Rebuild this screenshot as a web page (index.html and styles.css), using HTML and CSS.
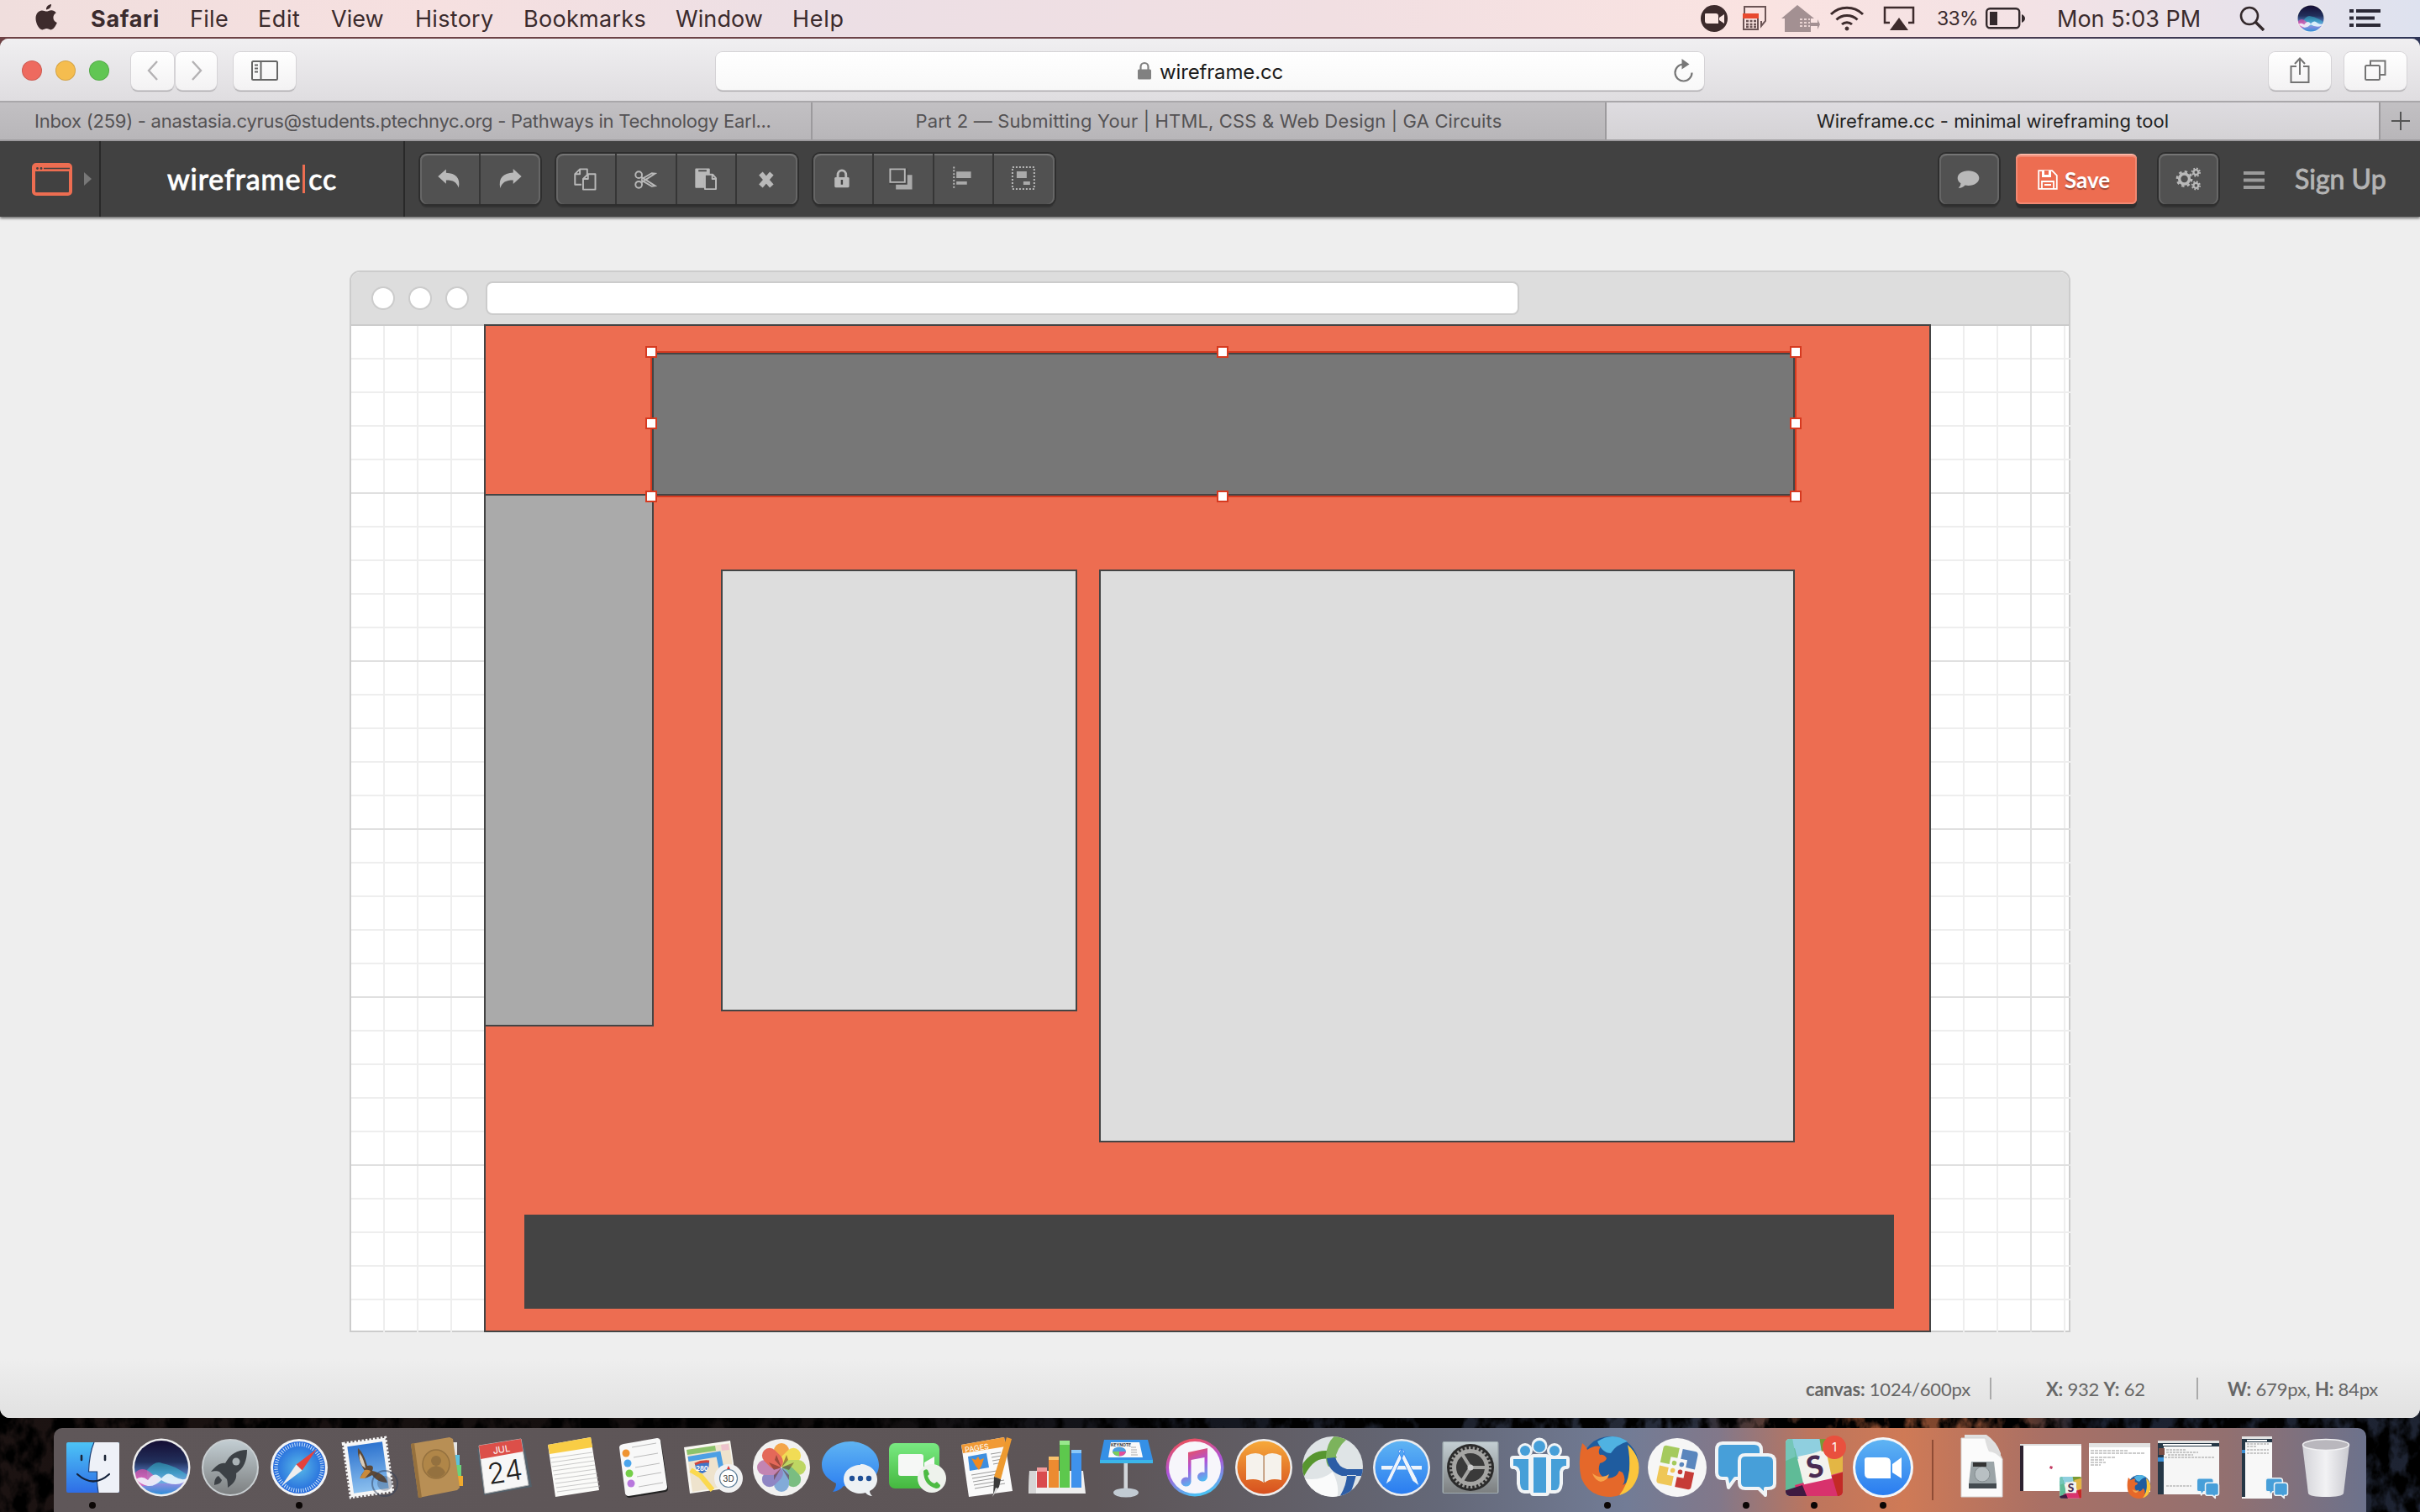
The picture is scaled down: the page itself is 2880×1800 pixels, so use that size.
FILE: index.html
```html
<!DOCTYPE html>
<html lang="en">
<head>
<meta charset="utf-8">
<title>Wireframe.cc - minimal wireframing tool</title>
<link rel="stylesheet" href="styles.css">
</head>
<body>
<div class="desktop">
<svg class="wallpaper" viewBox="0 0 2880 112" preserveAspectRatio="none">
  <defs>
    <linearGradient id="rock"><stop offset="0" stop-color="#1c1312"/><stop offset=".35" stop-color="#120e0e"/><stop offset=".5" stop-color="#141720"/><stop offset=".7" stop-color="#272d3c"/><stop offset=".76" stop-color="#8a4a2c"/><stop offset=".83" stop-color="#7a452f"/><stop offset=".86" stop-color="#1b2130"/><stop offset="1" stop-color="#1e2433"/></linearGradient>
    <filter id="grain" x="0" y="0" width="100%" height="100%"><feTurbulence type="fractalNoise" baseFrequency=".045 .035" numOctaves="4" seed="4"/><feColorMatrix values="0 0 0 0 0  0 0 0 0 0  0 0 0 0 0  4 0 0 0 -1.4"/></filter>
  </defs>
  <rect width="2880" height="112" fill="url(#rock)"/>
  <rect width="2880" height="112" filter="url(#grain)"/>
</svg>

<header class="menubar">
  <svg class="apple" width="28" height="34" viewBox="0 0 28 34"><path d="M20 1c.3 3.200-2.600 6.500-6 6.400C13.700 4.200 16.700 1.200 20 1zM14.300 9.600c1.500 0 3.200-1.400 5.800-1.400 2.200 0 4.400 1.200 5.700 3.100-5 3-4.200 9.800 1 11.800-1.300 3.700-4.300 8.300-7.200 8.300-2 0-2.700-1.300-5.100-1.300s-3.200 1.300-5.100 1.300C5.700 31.400 1.500 24 1.500 18c0-6 3.700-9.500 7.400-9.500 2.300 0 4 1.100 5.400 1.100z" fill="#3d2b2c"/></svg>
  <nav class="menus">
    <span class="m-app">Safari</span><span class="m-file">File</span><span class="m-edit">Edit</span><span class="m-view">View</span><span class="m-history">History</span><span class="m-bookmarks">Bookmarks</span><span class="m-window">Window</span><span class="m-help">Help</span>
  </nav>
  <div class="tray">
    <svg width="32" height="34" viewBox="0 0 32 34"><circle cx="16" cy="17" r="16" fill="#3d2b2c"/><path d="M5 12q0-1 1-1h12q3 0 3 3v9H8q-3 0-3-3zM22 16l6-4v11l-6-4z" fill="#fbe6e3"/></svg>
    <svg class="t-cal" width="28" height="30" viewBox="0 0 28 30" fill="none"><path d="M2 9V1h25v17l-5 6V18" stroke="#6b5455" stroke-width="2"/><path d="M1 10h17v18H1z" stroke="#6b5455" stroke-width="2"/><path d="M0 9h19v6H0z" fill="#e8492f"/><path d="M4 18h12M4 22h12M4 25h12" stroke="#6b5455" stroke-width="2.500" stroke-dasharray="3 1.500"/></svg>
    <svg class="t-house" width="46" height="34" viewBox="0 0 46 34"><path d="M19 1 0 17h4v16h31v-7h8v4l3-6-3-6v4h-8v-5h4L24 5z" fill="#a39092"/><path d="M22 18h12M22 22h12M22 26h12" stroke="#e8d3d2" stroke-width="2" stroke-dasharray="3 2"/></svg>
    <svg class="t-wifi" width="42" height="30" viewBox="0 0 42 30" fill="none" stroke="#3d2b2c" stroke-width="3"><path d="M2 10a27 27 0 0 1 38 0M8.500 16.500a18 18 0 0 1 25 0M15 22a9 9 0 0 1 12 0"/><circle cx="21" cy="27" r="2" fill="#3d2b2c" stroke-width="1"/></svg>
    <svg class="t-air" width="38" height="30" viewBox="0 0 38 30"><path d="M8 20H2V2h34v18h-6" fill="none" stroke="#3d2b2c" stroke-width="2.500"/><path d="M19 14 30 29H8z" fill="#3d2b2c"/></svg>
    <span class="t-pct">33%</span>
    <svg class="t-bat" width="48" height="26" viewBox="0 0 48 26"><rect x="1.200" y="1.200" width="39" height="23" rx="4" fill="none" stroke="#33292c" stroke-width="2.400"/><path d="M5 5h9v16H5z" fill="#33292c"/><path d="M43 8q4 2 4 5t-4 5z" fill="#33292c"/></svg>
    <span class="t-clock">Mon 5:03 PM</span>
    <svg class="t-find" width="30" height="30" viewBox="0 0 30 30" fill="none" stroke="#33292c" stroke-width="2.600"><circle cx="12" cy="12" r="10"/><path d="m19 19 10 10" stroke-width="3.400"/></svg>
    <svg class="t-siri" width="32" height="32" viewBox="8 14 66 66"><use href="#siriball"/></svg>
    <svg class="t-list" width="38" height="22" viewBox="0 0 38 22" stroke="#2b2936" stroke-width="4"><path d="M0 2h5M8 2h29M0 10.500h5M8 10.500h22M0 19h5M8 19h29"/></svg>
  </div>
</header>

<main class="window">
  <div class="safari-bar">
    <div class="lights"><i class="red"></i><i class="yellow"></i><i class="green"></i></div>
    <div class="btn back"><svg width="14" height="24" viewBox="0 0 14 24"><path d="M12 1 2 12l10 11" fill="none" stroke="#b4b2b4" stroke-width="2.400"/></svg></div>
    <div class="btn fwd"><svg width="14" height="24" viewBox="0 0 14 24"><path d="m2 1 10 11L2 23" fill="none" stroke="#b4b2b4" stroke-width="2.400"/></svg></div>
    <div class="btn side"><svg width="32" height="24" viewBox="0 0 32 24" fill="none" stroke="#666" stroke-width="2"><rect x="1" y="1" width="30" height="22" rx="1.500"/><path d="M11.500 1v22"/><path d="M4 5.500h4M4 9.500h4M4 13.500h4"/></svg></div>
    <div class="address">
      <svg class="lock" width="16" height="22" viewBox="0 0 16 22"><path d="M3.500 10V6.500a4.500 4.500 0 0 1 9 0V10" fill="none" stroke="#818181" stroke-width="2.200"/><rect y="9.500" width="16" height="12" rx="1.500" fill="#818181"/></svg>
      <span class="url">wireframe.cc</span>
      <svg class="reload" width="26" height="28" viewBox="0 0 26 28"><path d="M12 6.500a10 10 0 1 0 10.500 10" fill="none" stroke="#777" stroke-width="2.200"/><path d="m10.500 0 9 6.500-9 6z" fill="#777"/></svg>
    </div>
    <div class="btn share"><svg width="24" height="32" viewBox="0 0 24 32" fill="none" stroke="#737373" stroke-width="2"><path d="M8 11H1.500v19h21V11H16M12 21V2M6 8l6-6.500L18 8"/></svg></div>
    <div class="btn tabs-btn"><svg width="26" height="26" viewBox="0 0 26 26" fill="none" stroke="#737373" stroke-width="2"><rect x="1" y="7" width="17" height="17" rx="1.500"/><path d="M7 7V1.500h17.500V18H18"/></svg></div>
  </div>
  <div class="tabs">
    <div class="tab t1">Inbox (259) - anastasia.cyrus@students.ptechnyc.org - Pathways in Technology Earl...</div>
    <div class="tab t2">Part 2 — Submitting Your | HTML, CSS &amp; Web Design | GA Circuits</div>
    <div class="tab t3">Wireframe.cc - minimal wireframing tool</div>
    <div class="newtab"><svg width="22" height="22" viewBox="0 0 22 22"><path d="M11 0v22M0 11h22" stroke="#555" stroke-width="2"/></svg></div>
  </div>

  <div class="appbar">
    <div class="device">
      <svg width="48" height="39" viewBox="0 0 48 39"><rect x="2" y="2" width="44" height="35" rx="3" fill="none" stroke="#ed6d51" stroke-width="4"/><path d="M2 3h44v7H2z" fill="#ed6d51"/><path d="M14 6.500h31" stroke="#414141" stroke-width="1.400"/><circle cx="6.500" cy="6.500" r="1.400" fill="#414141"/><circle cx="11" cy="6.500" r="1.400" fill="#414141"/></svg>
      <svg class="caret" width="9" height="16" viewBox="0 0 9 16"><path d="m0 0 9 8-9 8z" fill="#777"/></svg>
    </div>
    <div class="brand"><span>wireframe</span><i></i><span class="cc">cc</span></div>
    <div class="group g1">
      <svg viewBox="0 0 72 60"><path d="M22 27 32 18v4.500C44 23 50 29 47.500 41 45 34 41 31.500 32 31.500V36z" fill="#b9b9b9"/></svg>
      <svg viewBox="0 0 72 60"><path d="M49 27 39 18v4.500C27 23 21 29 23.500 41 26 34 30 31.500 39 31.500V36z" fill="#b9b9b9"/></svg>
    </div>
    <div class="group g2">
      <svg viewBox="0 0 72 60" fill="none" stroke="#b9b9b9" stroke-width="2" stroke-linejoin="round"><path d="M31 37h-8V24l6-6h9v7M29 18v6h-6"/><path d="M33 43h15V24h-9l-6 6zM39 24v6h-6" fill="#515151"/></svg>
      <svg viewBox="0 0 72 60" fill="none" stroke="#b9b9b9" stroke-width="2"><circle cx="27" cy="25" r="4"/><circle cx="27" cy="37" r="4"/><path d="m30 27.500 17 11-4 .500-13-7.500M30 34.500l17-11-4-.500-13 7.500"/></svg>
      <svg viewBox="0 0 72 60"><path d="M22 18q0-1 1-1h16q1 0 1 1v6h-2l-5 5v12H23q-1 0-1-1z" fill="#b9b9b9"/><path d="M26 20h10" stroke="#515151" stroke-width="2"/><path d="M34 42.500h13.500V29l-4-4.500H34zM43 24v6h5" fill="#515151" stroke="#b9b9b9" stroke-width="2" stroke-linejoin="round"/></svg>
      <svg viewBox="0 0 72 60"><path d="m28.500 23.500 13 15m0-15-13 15" stroke="#b9b9b9" stroke-width="6"/></svg>
    </div>
    <div class="group g3">
      <svg viewBox="0 0 72 60"><path d="M30 29v-4a5 5.500 0 0 1 10 0v4" fill="none" stroke="#b9b9b9" stroke-width="3"/><rect x="26" y="28" width="18" height="12.500" rx="1.500" fill="#b9b9b9"/><path d="M35 31v6" stroke="#444" stroke-width="2.500"/></svg>
      <svg viewBox="0 0 72 60"><path d="M27 25h20v18H27z" fill="#aaa"/><path d="M19 17h22v20H19z" fill="#444"/><path d="M20 18h18v16H20z" fill="#515151" stroke="#b9b9b9" stroke-width="2"/></svg>
      <svg viewBox="0 0 72 60"><path d="M24 15v28" stroke="#b9b9b9" stroke-width="2" stroke-dasharray="2 2"/><path d="M27 21h18v8H27zM27 33h13v4H27z" fill="#aaa"/></svg>
      <svg viewBox="0 0 72 60"><rect x="22" y="16" width="26" height="26" fill="none" stroke="#b9b9b9" stroke-width="2" stroke-dasharray="2 2"/><path d="M27 21h12v8H27zM35 33h8v4h-8z" fill="#aaa"/></svg>
    </div>
    <div class="right">
      <div class="group"><svg viewBox="0 0 72 60"><path d="M35 20c7.500 0 13 3.800 13 9s-5.500 9-13 9l-4-.400q-3 3.400-8 3.400 3-2.500 2.800-5.800Q22 33 22 29c0-5.200 5.500-9 13-9z" fill="#b9b9b9"/></svg></div>
      <div class="save"><svg width="24" height="24" viewBox="0 0 24 24"><path d="M1.200 1.200h16l5.600 5.600v16H1.200zM5 22v-8h14v8M8 18h8" fill="none" stroke="#fff" stroke-width="1.800"/><path d="M5 1h11v8H5z" fill="#fff"/><path d="M8 1h5v5H8z" fill="#ed6d51"/></svg><span>Save</span></div>
      <div class="group gears"><svg viewBox="0 0 72 60" fill="none" stroke="#b9b9b9"><circle cx="31" cy="30" r="6" stroke-width="3.500"/><circle cx="31" cy="30" r="8.800" stroke-width="2.500" stroke-dasharray="3.450 3.450"/><circle cx="45" cy="22" r="3" stroke-width="2.400"/><circle cx="45" cy="22" r="4.800" stroke-width="1.800" stroke-dasharray="1.880 1.880"/><circle cx="45" cy="38" r="3" stroke-width="2.400"/><circle cx="45" cy="38" r="4.800" stroke-width="1.800" stroke-dasharray="1.880 1.880"/></svg></div>
      <svg class="burger" width="25" height="21" viewBox="0 0 25 21"><path d="M0 2h25M0 10.500h25M0 19h25" stroke="#9b9b9b" stroke-width="4"/></svg>
      <span class="signup">Sign Up</span>
    </div>
  </div>

  <div class="page">
    <section class="frame">
      <div class="frame-head"><i></i><i></i><i></i><div class="frame-url"></div></div>
      <div class="canvas">
        <div class="shape s-bg"></div>
        <div class="shape s-side"></div>
        <div class="shape s-card1"></div>
        <div class="shape s-card2"></div>
        <div class="shape s-foot"></div>
        <div class="shape s-head"></div>
        <div class="handles"><b></b><b></b><b></b><b></b><b></b><b></b><b></b><b></b></div>
      </div>
    </section>
    <footer class="status">
      <span class="st1"><b>canvas:</b> 1024/600px</span><i></i><span class="st2"><b>X:</b> 932 <b>Y:</b> 62</span><i></i><span class="st3"><b>W:</b> 679px, <b>H:</b> 84px</span>
    </footer>
  </div>
</main>

<div class="dock">
  <svg viewBox="0 0 82 100"><defs><linearGradient id="fb" x2="0" y2="1"><stop stop-color="#4cc4f6"/><stop offset="1" stop-color="#2e6de6"/></linearGradient></defs><rect x="10" y="17" width="63" height="60" rx="2" fill="url(#fb)"/><path d="M43 17h28q2 0 2 2v56q0 2-2 2H48c-1.500-8-2-16-1.500-25H36.500C37 38 39 26 43 17z" fill="#eef1f8"/><path d="M43 17c-4 9-6 21-6.500 35h10c-.5 9 0 17 1.500 25" fill="none" stroke="#1d3f75" stroke-width="1.200"/><path d="M28 33v5M56 33v5" stroke="#1b2536" stroke-width="2.600" stroke-linecap="round"/><path d="M23 55q19 17 38 0" fill="none" stroke="#14223a" stroke-width="2.200" stroke-linecap="round"/><circle cx="41" cy="92" r="4" class="dot"/></svg>
  <svg viewBox="0 0 82 100"><defs><linearGradient id="sb" x2="0" y2="1"><stop stop-color="#150d33"/><stop offset=".4" stop-color="#22305c"/><stop offset=".6" stop-color="#4b6fb0"/><stop offset=".75" stop-color="#a58be0"/><stop offset="1" stop-color="#2f8fd8"/></linearGradient></defs><g id="siriball"><circle cx="41" cy="47" r="34.500" fill="#eee"/><circle cx="41" cy="47" r="32" fill="url(#sb)"/><path d="M24 50q10-12 18-8 14 2 30 14-4 8-10 10H24z" fill="#35d0e0" opacity=".45"/><path d="M10 53q8-8 18 0 6 6 12 8-8 8-22 8-8-6-8-16z" fill="#ff4fa8" opacity=".6"/><path d="M11 61q7-5 14 1 8-12 16-2 8-10 16-2 8 5 15 2-4 7-14 7-10 0-17-5-8 8-16 7-9-2-14-8z" fill="#f2fcff" opacity=".85"/></g></svg>
  <svg viewBox="0 0 82 100"><defs><linearGradient id="gr" x2="0" y2="1"><stop stop-color="#c3ced3"/><stop offset="1" stop-color="#7c7f80"/></linearGradient></defs><circle cx="41" cy="47" r="33" fill="url(#gr)" stroke="#c9cfd2" stroke-width="2"/><path d="M61 26c-12 0-20 5-26 16-6-1-11 3-17 10 4-1 8-1 10 0l9 9c1 3 1 7 1 10 8-5 11-11 10-17 9-6 13-15 13-28z" fill="#3c4146"/><circle cx="48" cy="40" r="4.500" fill="#aab2b6"/><path d="M27 57c-4 2-5 6-5 11 4-1 8-2 9-6z" fill="#3c4146"/></svg>
  <svg viewBox="0 0 82 100"><defs><radialGradient id="sf"><stop stop-color="#58b9e8"/><stop offset="1" stop-color="#2368dc"/></radialGradient></defs><circle cx="41" cy="47" r="34" fill="#f3f4f5"/><circle cx="41" cy="47" r="31" fill="url(#sf)"/><circle cx="41" cy="47" r="27.500" fill="none" stroke="#cfe6fa" stroke-width="4.500" stroke-dasharray="1 1.880"/><path d="M62 25 37.500 43.500l7 7z" fill="#e5413b"/><path d="M20 69l17.500-25.500 7 7z" fill="#eee"/><circle cx="41" cy="92" r="4" class="dot"/></svg>
  <svg viewBox="0 0 82 100"><defs><linearGradient id="ml" x2="0" y2="1"><stop stop-color="#2d73cf"/><stop offset="1" stop-color="#8cc0ee"/></linearGradient></defs><g transform="rotate(-8 41 47)"><rect x="16" y="15" width="50" height="64" fill="#f6f6f6"/><rect x="15.500" y="14.500" width="51" height="65" fill="none" stroke="#f6f6f6" stroke-width="3" stroke-dasharray="2.500 2"/><rect x="20" y="19" width="42" height="56" fill="url(#ml)"/></g><path d="M29 24c5 4 9 13 11 21 7-2 8 2 6 6 9 2 16 6 18 14-8 0-15-4-18-9-6 3-9 5-14 3 1-4 3-6 5-8-5-8-9-18-8-27z" fill="#5d4937"/><path d="M31 30c4 5 6 12 7 18l-4-3c-3-5-4-10-3-15z" fill="#d9cdbb"/><path d="M37 50q6-1 7 2l-7 8h-6z" fill="#c98a3c"/><circle cx="61" cy="66" r="15" fill="none" stroke="#32405a" stroke-width="2" opacity=".5"/><circle cx="61" cy="66" r="9" fill="#32405a" opacity=".3"/></svg>
  <svg viewBox="0 0 82 100"><path d="M60 17h5v15h-5z" fill="#e5e5e5"/><path d="M62 32h6v12h-6z" fill="#5cc0dd"/><path d="M63 44h7v13h-7z" fill="#6bd27b"/><path d="M64 57h8v12h-8z" fill="#efaa2e"/><path d="m10 19 46-8 4 2 8 58-3 3-46 9z" fill="#b88f55"/><path d="m10 19 4-1 9 65h-4z" fill="#96713e"/><ellipse cx="40" cy="43" rx="16" ry="17" fill="#b08648" stroke="#94713f" stroke-width="1.500"/><circle cx="40" cy="39" r="6" fill="#94713f"/><path d="M29 53q2-6 11-8 9 2 11 8-4 6-11 6t-11-6z" fill="#94713f"/></svg>
  <svg viewBox="0 0 82 100"><path d="m7 25 55-10 10 55-57 10z" fill="#53606a"/><path d="m9 21 50-8 9 55-52 10z" fill="#f7f7f7" stroke="#bbb"/><path d="m9 21 50-8 2.500 15L11 37z" fill="#dc4f49"/><g transform="rotate(-9 40 46)" font-family="Inter,sans-serif" text-anchor="middle"><text x="39" y="29" font-size="11" fill="#fff">JUL</text><text x="39" y="64" font-size="34" font-weight="300" fill="#222">24</text></g></svg>
  <svg viewBox="0 0 82 100"><path d="m9 20 51-9 10 63-52 8z" fill="#fbfbf9"/><path d="m9 20 51-9 2 12-51 8z" fill="#f9cd45"/><path d="m12 36 50-7m-49 12 50-7m-49 12 50-7m-49 12 50-7m-49 12 50-7m-49 12 51-7m-50 12 51-7m-50 12 51-7m-50 12 51-7" stroke="#bdbdbd" stroke-width=".8"/></svg>
  <svg viewBox="0 0 82 100"><path d="m17 19 40-7q3 0 4 3l8 55q0 3-3 4l-43 7q-3 0-4-3l-7-55q0-3 5-4z" fill="#222" transform="translate(1 2)"/><path d="m17 19 40-7q3 0 4 3l8 55q0 3-3 4l-43 7q-3 0-4-3l-7-55q0-3 5-4z" fill="#f8f8f8"/><circle cx="20" cy="30" r="4.500" fill="#ef9432"/><circle cx="22" cy="42" r="4.500" fill="#4aa5ec"/><circle cx="24" cy="54" r="4.500" fill="#75cf49"/><circle cx="26" cy="66" r="4.500" fill="#b877dd"/><path d="m27 23 29-5M29 35l29-5M31 47l29-5M33 58l29-5M35 70l29-5" stroke="#bbb"/></svg>
  <svg viewBox="0 0 82 100"><path d="m7 23 55-8 8 55-56 8z" fill="#f8f7f2"/><path d="m10 26 51-8 7 50-51 8z" fill="#eee3cd"/><path d="m10 26 34-5 1 6-34 5z" fill="#8cc36b"/><path d="m12 37 36-6 8 40" fill="none" stroke="#4da0e4" stroke-width="6"/><path d="m15 50 12 7 14 17" fill="none" stroke="#fbd950" stroke-width="6"/><path d="m51 20 9-1 1 7-9 1z" fill="#eec3cd"/><path d="M20 43q8-4 17-2 0 11-8 13-8-2-9-11z" fill="#3f75c8"/><path d="M20 43q8-4 17-3" stroke="#d0453d" stroke-width="3" fill="none"/><text x="28.500" y="51" font-size="7.500" font-family="Inter,sans-serif" font-weight="700" fill="#fff" text-anchor="middle">280</text><circle cx="60" cy="60" r="17" fill="#f1f1f1"/><circle cx="60" cy="60" r="10.500" fill="#fff" stroke="#5d7f9b" stroke-width="1.200"/><text x="60" y="64" font-size="10" font-family="Inter,sans-serif" fill="#333" text-anchor="middle">3D</text><path d="m60 45-2 4h4z" fill="#d33"/></svg>
  <svg viewBox="0 0 82 100"><circle cx="41" cy="47" r="34" fill="#f1f1f0"/><g opacity=".85"><rect x="32" y="18" width="18" height="28" rx="9" fill="#f4982c"/><rect x="32" y="18" width="18" height="28" rx="9" fill="#f2d93a" transform="rotate(45 41 47)"/><rect x="32" y="18" width="18" height="28" rx="9" fill="#b4d24b" transform="rotate(90 41 47)"/><rect x="32" y="18" width="18" height="28" rx="9" fill="#66b56e" transform="rotate(135 41 47)"/><rect x="32" y="18" width="18" height="28" rx="9" fill="#6f9fd4" transform="rotate(180 41 47)"/><rect x="32" y="18" width="18" height="28" rx="9" fill="#7f74bd" transform="rotate(225 41 47)"/><rect x="32" y="18" width="18" height="28" rx="9" fill="#bb72a8" transform="rotate(270 41 47)"/><rect x="32" y="18" width="18" height="28" rx="9" fill="#e2513f" transform="rotate(315 41 47)"/></g><path d="m41 47-8-9 2-6 6 15 6-15 2 6-8 9 15-6-6 9-9-3 9 9v6l-9-15-9 15v-6l9-9-9 3-6-9z" fill="#5a2a20" opacity=".5"/></svg>
  <svg viewBox="0 0 82 100"><defs><linearGradient id="bl" x2="0" y2="1"><stop stop-color="#5fb4f3"/><stop offset="1" stop-color="#2a7cf0"/></linearGradient></defs><path d="M41 16c18 0 34 12 34 28S59 70 41 70q-5 0-8-1-5 6-13 7 4-5 4-10C14 61 7 54 7 44c0-16 16-28 34-28z" fill="url(#bl)"/><path d="M53 43c11 0 20 8 20 18 0 6-3 11-9 14 0 2 1 4 3 6-4 0-6-2-8-4q-3 1-6 1c-11 0-20-7-20-17s9-17 20-17z" fill="#edf1f4"/><g fill="#1f4f96"><circle cx="43" cy="60" r="3.200"/><circle cx="53" cy="60" r="3.200"/><circle cx="63" cy="60" r="3.200"/></g></svg>
  <svg viewBox="0 0 82 100"><defs><linearGradient id="gn" x2="0" y2="1"><stop stop-color="#79ea82"/><stop offset="1" stop-color="#45b83f"/></linearGradient></defs><rect x="5" y="18" width="60" height="54" rx="7" fill="url(#gn)"/><path d="M16 34q0-3 3-3h24q3 0 3 3v20q0 3-3 3H19q-3 0-3-3zM47 41l12-7v20l-12-5z" fill="#f6f8f6"/><circle cx="56" cy="60" r="17" fill="#eef2ec"/><path d="M46 51q3-3 5-1l2 5-2 2q2 7 8 9l3-2 4 4q0 4-5 4-15-4-15-21z" fill="#4dbb43"/></svg>
  <svg viewBox="0 0 82 100"><path d="m9 20 51-9 10 64-52 7z" fill="#fafafa"/><path d="m9 20 51-9 2 11-51 8z" fill="#f19a35"/><text x="28" y="27" transform="rotate(-9 28 27)" font-size="9" font-family="Inter,sans-serif" fill="#fff" text-anchor="middle">PAGES</text><path d="m17 34 22-4 3 17-23 4z" fill="#3e8ede"/><path d="m21 36 5 2 3-4 2 4 5-2-3 9-3 5-4-5z" fill="#f28a1f"/><path d="m44 31 12-2m-11 6 12-2m-11 6 12-2m-11 6 12-2M21 56l36-6m-35 10 36-6m-35 10 30-5m-29 9 36-6m-35 10 36-6" stroke="#999"/><path d="m63 11 6 2-13 48-8-3z" fill="#ee9a2f"/><path d="m48 58 8 3-2 9-7 10z" fill="#3b3b3b"/><path d="m50 71 3 1-7 10z" fill="#ddd"/></svg>
  <svg viewBox="0 0 82 100"><path d="M8 51h64l3 27H7z" fill="#efefef"/><path d="M8 51h8v27H7z" fill="#d6d6d6"/><path d="M17 48h12v23H17z" fill="#d94b4e"/><path d="M31 34h12v37H31z" fill="#ec8b31"/><path d="M44 16h12v55H44z" fill="#5dc84d"/><path d="M58 26h12v45H58z" fill="#3f92ec"/><path d="M17 47h12v5H17z" fill="#f19a9b"/><path d="M31 34h12v4H31z" fill="#f8c16d"/><path d="M44 15h12v5H44z" fill="#98e98c"/><path d="M58 26h12v4H58z" fill="#8bc8f8"/></svg>
  <svg viewBox="0 0 82 100"><path d="M38.500 40h4.500v38h-4.500z" fill="#d2d6da"/><ellipse cx="41" cy="77" rx="15" ry="5.500" fill="#c2cbd3"/><path d="M15 14h52l6 24H10z" fill="#3590e6"/><path d="M10 38h63v4H10z" fill="#3bb6ea"/><path d="m23 17 34 0 4 18H20z" fill="#fafafa"/><text x="35" y="21.500" font-size="5" font-weight="700" font-family="Inter,sans-serif" fill="#333" text-anchor="middle">KEYNOTE</text><ellipse cx="33" cy="28" rx="8" ry="5.500" fill="#4d9fe0"/><path d="M33 28h8q-1 5-8 5.500z" fill="#e24f9a"/><path d="M33 28v5.500q-7-1-8-5.500z" fill="#7ccc5b"/><path d="M47 23h6m-6 3h7m-7 3h7m-7 3h8" stroke="#aaa"/></svg>
  <svg viewBox="0 0 82 100"><defs><linearGradient id="it" x1=".2" x2=".5" y2="1"><stop stop-color="#f2504f"/><stop offset=".5" stop-color="#b052d8"/><stop offset="1" stop-color="#49c2f4"/></linearGradient></defs><circle cx="41" cy="47" r="34.500" fill="url(#it)"/><circle cx="41" cy="47" r="31" fill="#f7f6fb"/><path d="M33 29l23-5v34a6 5.500 0 1 1-3.500-5V35L36.500 38v26a6 5.500 0 1 1-3.500-5z" fill="url(#it)"/></svg>
  <svg viewBox="0 0 82 100"><defs><linearGradient id="or" x2="0" y2="1"><stop stop-color="#f6a93a"/><stop offset="1" stop-color="#d7501f"/></linearGradient></defs><circle cx="41" cy="47" r="34" fill="#eee"/><circle cx="41" cy="47" r="31.500" fill="url(#or)"/><path d="M20 33q12-6 20.500 0 .5.500.500 1v31q-8-6-21-3zM62 33q-12-6-20 0v32q7-6 20-3z" fill="#f5f2ec"/><path d="M41 33v31" stroke="#ba9d83" stroke-width="1.500"/></svg>
  <svg viewBox="0 0 82 100"><defs><clipPath id="cb"><circle cx="41" cy="46" r="36"/></clipPath></defs><g clip-path="url(#cb)"><path d="M0 0h82v90H0z" fill="#dfe4e6"/><path d="M5 60q22 4 36-8 10 20 4 34H10z" fill="#fafbfb"/><path d="M2 48Q14 26 34 27q8 1 12 8l-6 3q-22-8-36 26z" fill="#57962f"/><path d="M48 6Q34 14 33 34q0 8 3 12l9-2q-4-16 14-32z" fill="#7cb35c"/><path d="M34 36q2 16 18 21h26V49H58q-10-2-14-14zM58 56h11q-4 16-9 26H49q8-12 9-26z" fill="#2c5da6"/></g></svg>
  <svg viewBox="0 0 82 100"><circle cx="41" cy="47" r="34" fill="#ececee"/><circle cx="41" cy="47" r="31.500" fill="url(#bl)"/><path d="M17 45h48v4.500H17z" fill="#eef4fb"/><path d="m41 25-17 36-2 6 6-4 17-35zM37 27l4-2 18 35 3 9-8-6z" fill="#eef4fb" stroke="#3d8ef2"/></svg>
  <svg viewBox="0 0 82 100"><rect x="7.500" y="16" width="67" height="62" rx="2" fill="#a2aeb2"/><rect x="9" y="17" width="64" height="60" fill="url(#gr)"/><circle cx="41" cy="47" r="28" fill="#2b2b2b"/><circle cx="41" cy="47" r="23" fill="none" stroke="#9a9a98" stroke-width="4" stroke-dasharray="2.400 2.400"/><circle cx="41" cy="47" r="19.500" fill="#3a3a3a" stroke="#a5a5a3" stroke-width="5"/><path d="M41 47 31 31M41 47h20M41 47 31 63" stroke="#a5a5a3" stroke-width="4"/><circle cx="41" cy="47" r="3.500" fill="#ccc"/></svg>
  <svg viewBox="0 0 82 100"><g id="people" fill="#469fd8"><g stroke="#f1f4f6" stroke-width="8" stroke-linejoin="round"><path d="M10 37h18v37h-5q-4 0-5-8V52q-1-6-6-7h-2zM73 37H55v37h5q4 0 5-8V52q1-6 6-7h2zM34 35h15v42H34z"/><circle cx="24" cy="27" r="5"/><circle cx="41" cy="21" r="5.500"/><circle cx="59" cy="27" r="5"/></g><path d="M10 37h18v37h-5q-4 0-5-8V52q-1-6-6-7h-2zM73 37H55v37h5q4 0 5-8V52q1-6 6-7h2zM34 35h15v42H34z"/><circle cx="24" cy="27" r="6"/><circle cx="41" cy="22" r="7"/><circle cx="59" cy="27" r="6"/></g></svg>
  <svg viewBox="0 0 82 100"><defs><g id="fox"><circle cx="43" cy="44" r="34" fill="#1f5c9f"/><path d="M28 16q18-12 36 0-14 4-20 14-10 0-16-14z" fill="#4fb2e2"/><path d="M66 22q14 14 10 34-8 24-32 26-26 0-35-22Q4 40 10 18q5 4 6 8 8-6 16-4-4 6-1 10 5-1 8 4-1 4-8 6-4 12 5 17 14 3 18-8l4 2q5 9 0 15 10-4 13-20 2-12-5-26z" fill="#e5682a"/><path d="M64 20q18 16 12 38-6 18-22 22 10-12 12-30 1-16-2-30z" fill="#fbc53b"/><path d="M22 54q10 8 20 1-2 8-10 9-7-2-10-10z" fill="#f7a34a"/></g></defs><use href="#fox"/><circle cx="40" cy="92" r="4" class="dot"/></svg>
  <svg viewBox="0 0 82 100"><circle cx="41" cy="47" r="35" fill="#f6f6f6"/><g transform="rotate(12 41 47)"><path d="M20 28q0-4 4-4h15v12h-8v9H20z" fill="#a5ca5d"/><path d="M43 24h15q4 0 4 4v17H51V36h-8z" fill="#5a86bd"/><path d="M20 49h11v9h8v12H24q-4 0-4-4z" fill="#efc757"/><path d="M51 49h11v17q0 4-4 4H43V58h8z" fill="#c63c37"/><circle cx="36.500" cy="42.500" r="2.800" fill="#a5ca5d"/><circle cx="45.500" cy="42.500" r="2.800" fill="#5a86bd"/><circle cx="36.500" cy="51.500" r="2.800" fill="#efc757"/><circle cx="45.500" cy="51.500" r="2.800" fill="#c63c37"/></g></svg>
  <svg viewBox="0 0 82 100"><g id="chat" fill="#479fd9" stroke="#f1f4f6" stroke-width="4" stroke-linejoin="round"><path d="M13 18h38q8 0 8 8v28q0 6-8 6H28l-8 11-2-11h-5q-7 0-7-7V26q0-8 7-8z"/><path d="M40 32h27q8 0 8 8v26q0 6-8 6h-3v8l-8-8H40q-7 0-7-7V39q0-7 7-7z"/></g><circle cx="41" cy="92" r="4" class="dot"/></svg>
  <svg viewBox="0 0 82 100"><defs><clipPath id="sc"><rect x="6" y="13" width="68" height="68" rx="5"/></clipPath><g id="slack" clip-path="url(#sc)"><path d="M0 0h82v100H0z" fill="#f3f2ed"/><path d="M0 0h46l4 26-50 19z" fill="#8fcfdf"/><path d="M0 28l17-4 14 58H0z" fill="#5fbb97"/><path d="M0 42l18-8-4-22H0z" fill="#74c6b8"/><path d="M46 10h36v10l-33 9z" fill="#7a9a35"/><path d="M51 24l30-8v46l-18 4z" fill="#e3b644"/><path d="M20 80l-3-12 65-18v36H20z" fill="#d8326d"/><path d="M61 57l18-6v30H68z" fill="#c32a26"/><path d="M0 76l26-8 8 20H0z" fill="#3e1a41"/></g></defs><use href="#slack"/><g transform="rotate(-12 41 47)"><path d="M24 30h34v34H24z" fill="#f3f2ed"/><text x="41" y="59" text-anchor="middle" font-size="36" font-weight="900" font-family="Lato,sans-serif" fill="#4a2b52">S</text></g><circle cx="64" cy="23" r="14" fill="#e9503e"/><text x="64" y="28" text-anchor="middle" font-size="14" font-family="Inter,sans-serif" fill="#fff">1</text><circle cx="40" cy="92" r="4" class="dot"/></svg>
  <svg viewBox="0 0 82 100"><circle cx="40" cy="47" r="36" fill="#f5f6f8"/><circle cx="40" cy="47" r="33" fill="url(#bl)"/><path d="M18 38q0-3 3-3h22q6 0 6 6v19H24q-6 0-6-6zM51 43l11-8v25l-11-7z" fill="#fff"/><circle cx="40" cy="92" r="4" class="dot"/></svg>
  <i class="sep"></i>
  <svg viewBox="0 0 82 100"><path d="M21 8h26q12 8 17 22v50H21z" fill="#e0e0e0"/><path d="M17 12h28q14 10 21 25v45H17z" fill="#fbfbfb" stroke="#d5d5d5"/><path d="M45 12q2 10 5 16 8 0 16 10-4-15-21-26z" fill="#dedede"/><path d="M29 40h27l3 26v6H26v-6z" fill="#9ba4a7"/><path d="M26 66h33v6H26z" fill="#444b50"/><circle cx="42" cy="55" r="9" fill="#b8c0c3" stroke="#858d90"/><path d="M31 41h16v5H31z" fill="#333"/></svg>
  <svg viewBox="0 0 82 100"><path d="M5 19h73v56H5z" fill="#fff"/><path d="M5 19h4v56H5z" fill="#2d2230"/><path d="M5 19h73v2H5z" fill="#ddd"/><path d="m41 45 3 1-1 3-3-1z" fill="#c33c63"/><g transform="translate(50 53) scale(.38)"><use href="#slack"/><path d="M24 30h34v34H24z" fill="#f3f2ed"/><text x="41" y="60" text-anchor="middle" font-size="36" font-weight="900" font-family="Lato,sans-serif" fill="#4a2b52">S</text></g></svg>
  <svg viewBox="0 0 82 100"><path d="M5 18h73v58H5z" fill="#fff"/><path d="M5 18h73v5H5z" fill="#e2e2e2"/><path d="M7 27h45M7 30h64M7 35h30M7 38h16M7 41h18M7 44h12" stroke="#999" stroke-width="1.200" stroke-dasharray="4 1"/><use href="#fox" transform="translate(48 52) scale(.39)"/></svg>
  <svg viewBox="0 0 82 100"><path d="M5 15h73v64H5z" fill="#f6f6f6"/><path d="M5 15h73v3H5z" fill="#e3e3e3"/><path d="M5 18h73v4H5zM5 22h7v57H5z" fill="#253746"/><path d="M11 19h58v2H11z" fill="#fff"/><path d="M6 24h7v8H6z" fill="#7a4d45"/><path d="M15 26h24M15 29h38M17 32h30M13 35h60M15 69h30" stroke="#999" stroke-width="1.200" stroke-dasharray="3 1"/><path d="M5 35h7v5H5z" fill="#3a8fd5"/><use href="#chat" transform="translate(49 53) scale(.38)"/></svg>
  <svg viewBox="0 0 82 100"><path d="M23 10h36v74H23z" fill="#f8f8f8"/><path d="M23 10h36v3H23z" fill="#e3e3e3"/><path d="M23 13h36v4H23zM23 17h4v65h-4z" fill="#253746"/><path d="M29 14h24v2H29z" fill="#fff"/><path d="M29 19h26M29 22h12M29 26h26M29 30h26" stroke="#999" stroke-width="1.200" stroke-dasharray="3 1"/><path d="M23 26h4v4h-4z" fill="#3a8fd5"/><use href="#chat" transform="translate(49 53) scale(.38)"/></svg>
  <svg viewBox="0 0 82 100"><defs><linearGradient id="tr"><stop stop-color="#d3d3d8"/><stop offset=".5" stop-color="#f2f2f4"/><stop offset="1" stop-color="#c9c9cf"/></linearGradient></defs><path d="M13 20h56l-7 58q-2 4-21 4t-21-4z" fill="url(#tr)"/><ellipse cx="41" cy="20" rx="27.500" ry="6.500" fill="#b9b7bd" stroke="#f1f1f3" stroke-width="1.500"/></svg>
</div>
</div>
</body>
</html>
```
FILE: styles.css
```css
* { box-sizing: border-box; }
body { margin: 0; font-family: Inter, "Liberation Sans", sans-serif; }
.desktop { position: relative; width: 2880px; height: 1800px; overflow: hidden; background: linear-gradient(90deg, #6e4245, #6b4449 60%, #2e3557); display: flex; flex-direction: column; }
.wallpaper { position: absolute; left: 0; bottom: 0; width: 2880px; height: 124px; }

/* menu bar */
.menubar { height: 44px; flex: none; position: relative; margin-bottom: 2px; display: flex; align-items: center; justify-content: space-between; background: linear-gradient(90deg, #f0dedd 0, #f6e0e0 18%, #ecdfe5 34%, #f1dfe2 55%, #fae3e1 73%, #f3e2e5 84%, #dee2ef 100%); font-size: 27px; color: #3b2b2d; white-space: nowrap; }
.apple { margin: 0 0 2px 41px; }
.menus { display: flex; flex: 1; margin-left: 39px; letter-spacing: .3px; }
.menus span { flex: none; }
.m-app { width: 118px; font-weight: 700; letter-spacing: .7px; }
.m-file { width: 81px; }
.m-edit { width: 87px; letter-spacing: .6px; }
.m-view { width: 100px; letter-spacing: 0; }
.m-history { width: 129px; }
.m-bookmarks { width: 181px; }
.m-window { width: 139px; letter-spacing: .1px; }
.m-help { letter-spacing: .7px; }
.tray { width: 856px; display: flex; align-items: center; }
.tray > * { flex: none; }
.t-cal { margin-left: 18px; }
.t-house { margin-left: 18px; }
.t-wifi { margin-left: 11px; }
.t-air { margin-left: 22px; }
.t-pct { width: 58px; margin-left: 26px; font-size: 23px; letter-spacing: -.7px; }
.t-clock { width: 217px; margin-left: 37px; }
.t-siri { margin-left: 39px; }
.t-list { margin-left: 30px; }

/* browser window */
.window { position: relative; height: 1642px; flex: none; display: flex; flex-direction: column; border-radius: 10px 10px 12px 12px; overflow: hidden; background: #eee; }
.safari-bar { height: 76px; display: flex; align-items: center; padding: 2px 16px 0 26px; background: linear-gradient(#f0eff1, #dfdde0); border-bottom: 2px solid #a9a7aa; }
.lights { display: flex; gap: 16px; margin-right: 26px; }
.lights i { width: 24px; height: 24px; border-radius: 50%; border: 1px solid #0002; }
.red { background: #ee6a5f; }
.yellow { background: #f5bd4f; }
.green { background: #61c654; }
.btn { height: 45px; border-radius: 8px; background: linear-gradient(#fff, #f3f2f3); box-shadow: 0 0 0 1px #d5d3d6, 0 2px 1px #a9a7aa; display: flex; align-items: center; justify-content: center; }
.back { width: 51px; margin-right: 2px; }
.fwd { width: 49px; margin-right: 20px; }
.side { width: 74px; margin-right: 500px; }
.address { width: 1176px; height: 45px; border-radius: 8px; background: linear-gradient(#fff, #f8f8f8); box-shadow: 0 0 0 1px #d5d3d6, 0 2px 1px #a9a7aa; display: flex; align-items: center; padding: 0 11px 0 502px; font-size: 24px; color: #1b1b1b; margin-right: 672px; }
.url { margin: 2px 0 0 10px; letter-spacing: -.15px; }
.reload { margin-left: auto; }
.share { width: 74px; margin-right: 16px; }
.tabs-btn { width: 74px; }
.tabs { height: 46px; display: flex; background: linear-gradient(#c2c0c3, #b8b6b9); border-bottom: 2px solid #a09ea1; font-size: 22px; color: #545254; }
.tab { display: flex; align-items: center; justify-content: center; border-right: 2px solid #9c9a9d; white-space: nowrap; }
.t1 { width: 967px; justify-content: flex-start; padding-left: 41px; letter-spacing: -.26px; }
.t2 { width: 945px; letter-spacing: .16px; }
.t3 { width: 921px; background: linear-gradient(#dedce0, #d4d2d5); color: #222; letter-spacing: .04px; }
.newtab { width: 47px; display: flex; align-items: center; justify-content: center; }

/* wireframe.cc toolbar */
.appbar { position: relative; height: 90px; display: flex; background: #414141; box-shadow: 0 2px 3px #0008; font-family: Lato, sans-serif; z-index: 1; }
.device { width: 120px; border-right: 2px solid #292929; display: flex; align-items: center; padding: 0 0 0 38px; gap: 14px; }
.brand { width: 362px; border-right: 2px solid #292929; display: flex; align-items: center; padding: 0 0 2px 79px; font-size: 34px; letter-spacing: .9px; color: #fff; -webkit-text-stroke: .9px #fff; }
.brand i { width: 3px; height: 34px; background: #ed6d51; margin: 2px 4px 0 2px; }
.group { flex: none; height: 60px; margin-top: 15px; display: flex; border-radius: 8px; background: #515151; border-top: 2px solid #757575; box-shadow: inset 2px 0 0 #666, inset -2px 0 0 #666, 0 0 0 2px #2e2e2e, 0 4px 1px #333; }
.group svg { width: 72px; height: 60px; margin-top: -2px; border-right: 2px solid #363636; }
.group svg:last-child { border-right: 0; }
.g1 { margin-left: 18px; width: 143px; }
.g2 { margin-left: 19px; width: 287px; }
.g3 { margin-left: 19px; width: 287px; }
.right { margin-left: auto; display: flex; padding-right: 42px; }
.right .group { width: 71px; }
.save { width: 144px; height: 60px; margin: 15px 26px 0 20px; border-radius: 6px; background: #ed6d51; border-top: 2px solid #fbb5a4; box-shadow: inset 0 0 0 2px #f28872, 0 5px 1px #2e2e2e; display: flex; align-items: center; gap: 8px; padding-left: 26px; color: #fff; font-weight: 700; font-size: 26px; text-shadow: 0 2px 1px #0005; }
.burger { margin: 36px 36px 0 30px; }
.signup { font-size: 32px; color: #b4b4b4; align-self: center; -webkit-text-stroke: .9px #b4b4b4; white-space: nowrap; width: 107px; padding-bottom: 2px; }

/* drawing area */
.page { flex: 1; display: flex; flex-direction: column; align-items: center; padding-top: 64px; background: linear-gradient(#eee, #eee 1360px, #e1e1e1); }
.frame { width: 2048px; height: 1264px; display: flex; flex-direction: column; border: 2px solid #ccc; border-radius: 12px 12px 0 0; background: #fff; }
.frame-head { height: 64px; flex: none; display: flex; align-items: center; gap: 16px; padding: 0 0 0 24px; background: #ddd; border-bottom: 2px solid #ccc; border-radius: 10px 10px 0 0; }
.frame-head i { width: 28px; height: 28px; border: 2px solid #ccc; border-radius: 50%; background: #fff; }
.frame-url { width: 1230px; height: 40px; border: 2px solid #ccc; border-radius: 8px; background: #fff; margin-left: 4px; }
.canvas { position: relative; flex: 1; margin: 0 -2px -2px 0; background:
  repeating-linear-gradient(90deg, transparent 0 198px, #e0e0e0 198px 200px),
  repeating-linear-gradient(transparent 0 198px, #e0e0e0 198px 200px),
  repeating-linear-gradient(90deg, transparent 0 38px, #eee 38px 40px),
  repeating-linear-gradient(transparent 0 38px, #eee 38px 40px); }
.shape { position: absolute; border: 2px solid #444; }
.s-bg { left: 158px; top: -2px; width: 1722px; height: 1200px; background: #ed6d51; }
.s-side { left: 158px; top: 200px; width: 202px; height: 634px; background: #aaa; }
.s-card1 { left: 440px; top: 290px; width: 424px; height: 526px; background: #ddd; }
.s-card2 { left: 890px; top: 290px; width: 828px; height: 682px; background: #ddd; }
.s-foot { left: 206px; top: 1058px; width: 1630px; height: 112px; background: #444; }
.s-head { left: 358px; top: 32px; width: 1360px; height: 170px; background: #777; outline: 2px solid #d63a20; }
.handles { position: absolute; left: 350px; top: 24px; width: 1376px; height: 186px; }
.handles b { position: absolute; width: 14px; height: 14px; background: #fff; border: 2px solid #d63a20; }
.handles b:nth-child(1) { left: 0; top: 0; }
.handles b:nth-child(2) { left: 680px; top: 0; }
.handles b:nth-child(3) { right: 0; top: 0; }
.handles b:nth-child(4) { left: 0; top: 85px; }
.handles b:nth-child(5) { right: 0; top: 85px; }
.handles b:nth-child(6) { left: 0; bottom: 0; }
.handles b:nth-child(7) { left: 680px; bottom: 0; }
.handles b:nth-child(8) { right: 0; bottom: 0; }
.status { align-self: flex-end; display: flex; margin-top: 53px; height: 28px; align-items: center; font: 22px Lato, sans-serif; letter-spacing: -.2px; color: #666; white-space: nowrap; }
.status i { width: 2px; height: 26px; background: #aaa; }
.st1 { width: 219px; }
.st2 { width: 244px; padding-left: 65px; }
.st3 { width: 264px; padding-left: 35px; }

/* dock */
.dock { position: relative; flex: none; width: 2752px; height: 100px; margin: 12px 0 0 64px; padding: 0 7px 0 5px; display: flex; border-radius: 10px 10px 0 0; background: linear-gradient(90deg, #5f5759, #5d5557 45%, #615e66 53%, #646878 60%, #727c96 68%, #82788a 72%, #bd755d 76%, #cf7a56 80%, #a97065 86%, #927070 94%, #6c728c); }
.dock svg { width: 82px; height: 100px; flex: none; }
.dot { fill: #0b0605; }
.sep { width: 34px; flex: none; height: 72px; margin-top: 14px; border-left: 2px solid #8f4c35; transform: translateX(16px); }
```
